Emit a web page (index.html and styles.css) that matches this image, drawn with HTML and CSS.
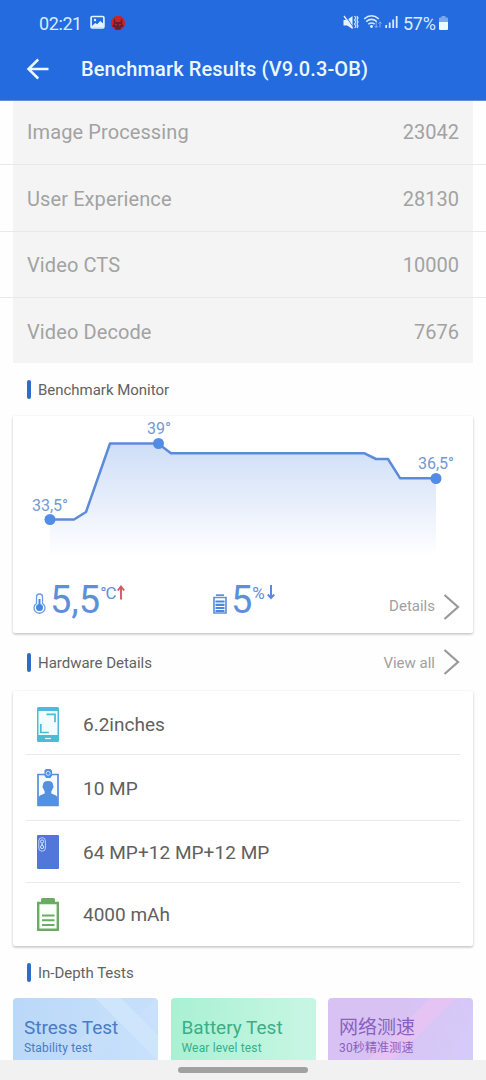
FILE: index.html
```html
<!DOCTYPE html>
<html lang="en">
<head>
<meta charset="utf-8">
<title>Benchmark Results</title>
<link rel="stylesheet" href="styles.css">
</head>
<body>
<div class="screen">
  <header class="top">
    <div class="status">
      <span class="clock">02:21</span>
      <svg class="status-left" width="38" height="18" viewBox="0 0 38 18">
        <rect x="1.100" y="2.500" width="12.800" height="11.500" rx="1.200" fill="none" stroke="#e3f4ff" stroke-width="1.700"/>
        <path d="M2 12l3.200-3 2 1.200 3-3.200 3.500 3v3.500H2z" fill="#e3f4ff"/><circle cx="5" cy="6" r="1.200" fill="#e3f4ff"/>
        <circle cx="28" cy="9" r="7.200" fill="#c7242c"/>
        <path d="M24 4l1.800 4h4.400l1.800-4 .3 6 1.700 2.600-2.500.5-1 2.700h-5l-1-2.700-2.500-.5 1.700-2.600z" fill="#681d31"/>
        <path d="M25.200 10.200l1.800 1M30.800 10.200l-1.800 1" stroke="#d93532"/>
      </svg>
      <svg class="status-right" width="56" height="18" viewBox="0 0 56 18">
        <path d="M.5 6h3.700l5.300-4v13L4.200 11.500H.5z" fill="#e3f4ff"/>
        <path d="M2.500 1.500l8 12.500" stroke="#246bdf" stroke-width="1"/><path d="M1 2l8.500 12" stroke="#e3f4ff" stroke-width="1.300"/>
        <path d="M11.500 2l1.500 2-1.500 2 1.500 2-1.500 2 1.500 2-1.300 2M14 2l1 2-1 2 1 2-1 2 1 2-1 2" fill="none" stroke="#e3f4ff" stroke-width="1.100"/>
        <g fill="none" stroke="#d5ebff" stroke-width="1.500"><path d="M21.200 4.800q7.300-6 14.600 0M23.200 7.600q5.300-4.400 10.600 0M25.300 10.200q3.200-2.600 6.400 0"/></g>
        <circle cx="28.500" cy="12.500" r="1.400" fill="#e3f4ff"/>
        <path d="M33.200 8v5.500m-1.500-1.500 1.500 1.700 1.500-1.700M37 13.500V8m-1.500 1.500L37 7.800l1.500 1.700" fill="none" stroke="#81aff2" stroke-width="1"/>
        <path d="M43.200 14v-3M46.700 14V8.500M50.200 14V5.500M53.700 14V2" stroke="#d8ecff" stroke-width="1.800"/>
      </svg>
      <span class="percent">57%</span>
      <svg class="power" width="9" height="14" viewBox="0 0 9 14"><path d="M0 2.500q0-1 1-1h1.500V0h4v1.500H8q1 0 1 1V7H0z" fill="#7ca7ef"/><path d="M0 6h9v7q0 1-1 1H1q-1 0-1-1z" fill="#eef9ff"/></svg>
    </div>
    <div class="title-bar">
      <svg class="back" width="24" height="24" viewBox="0 0 24 24"><path d="M12.200 2.500 2.500 12l9.700 9.500M2.800 12H22.500" fill="none" stroke="#eaf8ff" stroke-width="2.500"/></svg>
      <h1 class="title">Benchmark Results (V9.0.3-OB)</h1>
    </div>
  </header>

  <main class="content">
    <ul class="scores">
      <li class="score"><span>Image Processing</span><b>23042</b></li>
      <li class="score"><span>User Experience</span><b>28130</b></li>
      <li class="score"><span>Video CTS</span><b>10000</b></li>
      <li class="score"><span>Video Decode</span><b>7676</b></li>
    </ul>

    <div class="section first"><i class="mark"></i><h2>Benchmark Monitor</h2></div>
    <section class="card monitor">
      <svg class="chart" width="460" height="150" viewBox="13 416 460 150">
        <defs><linearGradient id="fade" x1="0" y1="440" x2="0" y2="556" gradientUnits="userSpaceOnUse"><stop offset="0" stop-color="#cdddf7"/><stop offset=".5" stop-color="#e5edfb"/><stop offset="1" stop-color="#fff"/></linearGradient></defs>
        <path d="M50 519.500H74L86 512 110 443.500H158L171 453H364L376 459H388L400 478H436V558H50z" fill="url(#fade)"/>
        <path d="M50 519.500H74L86 512 110 443.500H158L171 453.200H364L376 459H388L400 478.200H436" fill="none" stroke="#5c8bd7" stroke-width="2.500" stroke-linejoin="round"/>
        <g fill="#528de5"><circle cx="50" cy="519.500" r="5.500"/><circle cx="158.500" cy="443.500" r="5.500"/><circle cx="436" cy="478.500" r="5.500"/></g>
        <g class="chart-label"><text x="32" y="510.500" textLength="36">33,5°</text><text x="147" y="434" textLength="24">39°</text><text x="418" y="469" textLength="36">36,5°</text></g>
      </svg>
      <div class="stats">
        <div class="stat heat">
          <svg width="13" height="21" viewBox="0 0 13 21"><path d="M3.500 10.500V4a3 3 0 0 1 6 0v6.500a5.500 5.300 0 1 1-6 0z" fill="none" stroke="#6c9ae0" stroke-width="1.300"/><circle cx="6.500" cy="14.500" r="3.500" fill="#4688e5"/><path d="M6.500 6v8" stroke="#4688e5" stroke-width="2"/></svg>
          <b class="number">5,5</b><span class="unit celsius">°C</span>
          <svg class="arrow up" width="8" height="15" viewBox="0 0 8 15"><path d="M4 14.500V2M.8 5.500 4 1.500l3.200 4" fill="none" stroke="#dc5365" stroke-width="1.900"/></svg>
        </div>
        <div class="stat drain">
          <svg width="14" height="20" viewBox="0 0 14 20"><path d="M3 1.200h8M1 3.500h12v15.500H1z" fill="none" stroke="#6392dc" stroke-width="1.700"/><path d="M2.500 7.500h9M2.500 10.800h9M2.500 14h9M2.500 17h9" stroke="#4688e5" stroke-width="2.200"/></svg>
          <b class="number">5</b><span class="unit">%</span>
          <svg class="arrow" width="8" height="15" viewBox="0 0 8 15"><path d="M4 0v13M.8 9.500 4 13l3.200-3.500" fill="none" stroke="#598bdb" stroke-width="2"/></svg>
        </div>
        <a class="more"><span>Details</span><svg width="17" height="26" viewBox="0 0 17 26"><path d="m1.500 1 13.500 12-13.500 12" fill="none" stroke="#999" stroke-width="2.200"/></svg></a>
      </div>
    </section>

    <div class="section second"><i class="mark"></i><h2>Hardware Details</h2><a class="more"><span>View all</span><svg width="17" height="26" viewBox="0 0 17 26"><path d="m1.500 1 13.500 12-13.500 12" fill="none" stroke="#999" stroke-width="2.200"/></svg></a></div>
    <ul class="card hardware">
      <li class="spec s1"><svg width="22" height="35" viewBox="0 0 22 35"><rect width="22" height="35" rx="1.500" fill="#4fb9d9"/><path d="M1.500 4h19v24h-19z" fill="#f2fdff"/><path d="M9.500 7.300H18v8M3.800 17v8.500h8" fill="none" stroke="#4fb9d9" stroke-width="1.700"/><path d="M8 31.500h6" stroke="#e5fbff" stroke-width="1.200"/></svg><span>6.2inches</span></li>
      <li class="spec s2"><svg width="22" height="38" viewBox="0 0 22 38"><path d="M1 5.500h20v31H1z" fill="#f5fbff" stroke="#5490e0" stroke-width="1.700"/><path d="M7.500 1.500 9 0h4.500L15 1.500v5L13.500 9H9L7.500 6.500z" fill="#5490e0"/><circle cx="11.200" cy="4.300" r="2" fill="none" stroke="#cce5ff" stroke-width="1"/><path d="M6 16q0-4 5-4t5 4q1.500 2-.5 4l-1.200 2.500v2l4.700 2q2 1 2 3.500v7H1v-7q0-2.500 2-3.500l4.700-2v-2L6.500 20q-2-2-.5-4z" fill="#5490e0"/></svg><span>10 MP</span></li>
      <li class="spec s3"><svg width="22" height="34" viewBox="0 0 22 34"><rect width="22" height="34" rx="1" fill="#5077d9"/><rect x="1.800" y="2.700" width="6.600" height="13.500" rx="3.200" fill="none" stroke="#bed3ff" stroke-width="1"/><circle cx="5.100" cy="6.500" r="1.600" fill="none" stroke="#d9e7ff"/><circle cx="5.100" cy="12" r="1.600" fill="none" stroke="#d9e7ff"/><circle cx="5.100" cy="9.300" r=".8" fill="#fff"/></svg><span>64 MP+12 MP+12 MP</span></li>
      <li class="spec s4"><svg width="22" height="33" viewBox="0 0 22 33"><path d="M4 1.500Q4 0 5.500 0h11Q18 0 18 1.500V5H4z" fill="#6aad61"/><path d="M1.200 5h19.600v26.800H1.200z" fill="#fafffa" stroke="#6aad61" stroke-width="2.400"/><path d="M5 17.500h12.500M5 22.300h12.500M5 27h12.500" stroke="#6aad61" stroke-width="1.900"/></svg><span>4000 mAh</span></li>
    </ul>

    <div class="section third"><i class="mark"></i><h2>In-Depth Tests</h2></div>
    <div class="tests">
      <article class="test stress"><h3>Stress Test</h3><p>Stability test</p></article>
      <article class="test battery"><h3>Battery Test</h3><p>Wear level test</p></article>
      <article class="test network"><h3>网络测速</h3><p>30秒精准测速</p></article>
    </div>
  </main>
  <footer class="nav"><i class="handle"></i></footer>
</div>
</body>
</html>
```

FILE: styles.css
```css
* { box-sizing: border-box; }
body, h1, h2, h3, p, ul { margin: 0; padding: 0; font-weight: 400; }
ul { list-style: none; }
b { font-weight: 400; }
body { background: #fff; font-family: Roboto, "Noto Sans CJK SC", sans-serif; }
svg { display: block; flex: none; }
.screen { width: 486px; height: 1080px; overflow: hidden; display: flex; flex-direction: column; background: #fefefe; }
.top { height: 101px; flex: none; background: #246bdf; border-bottom: 1px solid #5d8fdd; }
.status { height: 46px; padding: 0 38px 0 39px; display: flex; align-items: center; color: #d7edff; font-size: 18px; }
.clock { width: 51px; letter-spacing: -.4px; }
.status-right { margin-left: auto; margin-right: 4px; }
.percent { width: 35px; white-space: nowrap; letter-spacing: -.3px; }
.power { margin-left: 1px; }
.title-bar { height: 46px; padding-left: 26px; display: flex; align-items: center; }
.title { margin-left: 31px; color: #eaf8ff; font-size: 20px; font-weight: 500; letter-spacing: .11px; white-space: nowrap; }
.content { height: 959px; overflow: hidden; flex: none; }
.scores { height: 262px; background: linear-gradient(90deg, #fefefe 13px, #f4f4f4 13px 473px, #fefefe 473px); }
.score { height: 66.6px; padding: 0 27px; display: flex; align-items: center; justify-content: space-between; border-bottom: 1px solid #e9e9e9; color: #a2a2a2; font-size: 20px; }
.score span { letter-spacing: .1px; }
.score:first-child { height: 64px; padding-bottom: 2px; }
.score:last-child { border: 0; height: 66px; padding-top: 1px; }
.score:nth-child(2), .score:nth-child(3) { padding-top: 2px; }
.section { padding: 0 26px 0 27px; display: flex; align-items: center; }
.section h2 { margin-left: 7px; color: #626262; font-size: 15px; white-space: nowrap; letter-spacing: -.02px; }
.first { height: 53px; }
.second { height: 58px; }
.third { height: 52px; }
.mark { width: 4px; height: 19px; border-radius: 2px; background: #316bc7; }
.first h2, .second h2, .third h2 { padding-top: 1px; }
.card { margin: 0 13px; background: #fff; border-radius: 2px; box-shadow: 0 1px 3px #0003, 0 2px 2px #0001; }
.monitor { height: 217px; }
.chart-label { fill: #7199d2; font-size: 16px; }
.stats { height: 67px; padding: 0 13px 0 20px; display: flex; }
.stat { display: flex; align-items: flex-start; color: #608fd9; }
.heat { width: 180px; }
.stat > svg:first-child { margin-top: 28px; }
.heat > svg:first-child { margin-top: 27px; }
.number { font-size: 38px; line-height: 44px; margin: 12px 0 0 4px; }
.unit { margin-top: 17px; font-size: 17px; line-height: 20px; }
.celsius { letter-spacing: -1px; }
.arrow { margin: 19px 0 0 2px; }
.arrow.up { margin-left: 1px; }
.more { margin-left: auto; display: flex; align-items: center; gap: 8px; color: #a0a0a0; font-size: 15px; }
.stats .more { height: 26px; margin-top: 28px; }
.stats .more span { padding-bottom: 3px; }
.second .more span { padding-top: 1px; }
.hardware { height: 255px; padding: 0 13px; }
.spec { padding-left: 11px; display: flex; align-items: center; border-bottom: 1px solid #e9e9e9; color: #606060; font-size: 19px; }
.spec span { margin-left: 24px; white-space: nowrap; }
.s1 { height: 64px; padding-top: 3px; }
.s2 { height: 66px; }
.s2 span { padding-top: 1px; }
.s3 { height: 62px; }
.s3 span { padding-top: 1px; letter-spacing: .05px; }
.s4 { height: 63px; border: 0; padding-bottom: 1px; }
.tests { display: grid; grid-template-columns: 145px 145px 145px; column-gap: 12.5px; padding-left: 13px; }
.test { height: 64px; border-radius: 4px 4px 0 0; padding: 18px 0 0 11px; overflow: hidden; white-space: nowrap; }
.test h3 { font-size: 19px; line-height: 24px; }
.test p { font-size: 12px; line-height: 16px; letter-spacing: .15px; }
.stress { color: #4a7bc4; background: linear-gradient(45deg, transparent 70%, #cfe5fb 70% 82%, transparent 82%), linear-gradient(135deg, transparent 52%, #c5dffa 52% 68%, transparent 68%), linear-gradient(90deg, #bad8f8, #c9e1fc); }
.battery { color: #3aae86; background: linear-gradient(90deg, #a9f1d3, #c8f6e4); }
.network { color: #8b5fbe; background: linear-gradient(135deg, transparent 49%, #e5c3f3 49% 61%, transparent 61%), linear-gradient(120deg, #d8c2f4 45%, #d4ccfa); }
.nav { height: 20px; flex: none; display: flex; justify-content: center; padding-top: 7px; background: #f1f1f1; }
.handle { width: 130px; height: 6px; border-radius: 3px; background: #a1a1a1; }
```
